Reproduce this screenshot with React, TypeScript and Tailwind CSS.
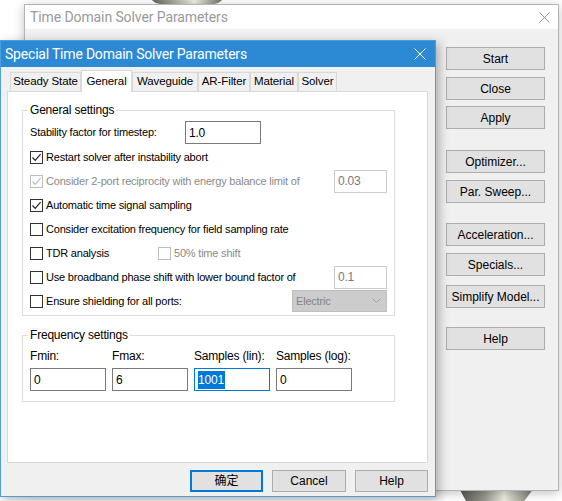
import React from 'react';

const FONT = "font-['Liberation_Sans',Arial,sans-serif]";

function CheckBox({ checked, disabled }: { checked?: boolean; disabled?: boolean }) {
  const border = disabled ? 'border-[#bcbcbc]' : 'border-[#333333]';
  return (
    <span className={`flex h-[13px] w-[13px] shrink-0 items-center justify-center border bg-white ${border}`}>
      {checked && (
        <svg width="11" height="11" viewBox="0 0 11 11">
          <path d="M1.5 5.5 L4.2 8.3 L9.6 2.2" fill="none" stroke={disabled ? '#bcbcbc' : '#222'} strokeWidth="1.2" />
        </svg>
      )}
    </span>
  );
}

function CheckRow({ label, checked, disabled, children }: { label: string; checked?: boolean; disabled?: boolean; children?: React.ReactNode }) {
  return (
    <div className="flex h-[24px] items-center">
      <CheckBox checked={checked} disabled={disabled} />
      <span className={`ml-[3px] ${disabled ? 'text-[#8a8a8a]' : 'text-black'}`}>{label}</span>
      {children}
    </div>
  );
}

function WinButton({ label, className = '' }: { label: string; className?: string }) {
  return (
    <div className={`flex h-[23px] w-[99px] items-center justify-center border border-[#adadad] bg-[#e1e1e1] text-[12px] text-black ${className}`}>
      {label}
    </div>
  );
}

function CloseX({ color, size = 12 }: { color: string; size?: number }) {
  return (
    <svg width={size} height={size} viewBox="0 0 12 12">
      <path d="M0.5 0.5 L11.5 11.5 M11.5 0.5 L0.5 11.5" stroke={color} strokeWidth="1" />
    </svg>
  );
}

function BackWindow() {
  const buttons: { label: string; mt: string }[] = [
    { label: 'Start', mt: 'mt-0' },
    { label: 'Close', mt: 'mt-[7px]' },
    { label: 'Apply', mt: 'mt-[6px]' },
    { label: 'Optimizer...', mt: 'mt-[21px]' },
    { label: 'Par. Sweep...', mt: 'mt-[7px]' },
    { label: 'Acceleration...', mt: 'mt-[20px]' },
    { label: 'Specials...', mt: 'mt-[7px]' },
    { label: 'Simplify Model...', mt: 'mt-[9px]' },
    { label: 'Help', mt: 'mt-[19px]' },
  ];
  return (
    <div className="absolute left-[24px] top-[4px] flex h-[487px] w-[535px] flex-col border border-[#b4b4b4] bg-[#f0f0f0] shadow-[0_2px_10px_rgba(0,0,0,0.25)]">
      <div className="flex h-[24px] items-center justify-between bg-white pl-[5px] pr-[8px]">
        <span className="font-['Roboto',sans-serif] text-[14px] tracking-[-0.1px] text-[#9a9a9a]">Time Domain Solver Parameters</span>
        <CloseX color="#8a8a8a" size={11} />
      </div>
      <div className="flex justify-end pr-[13px] pt-[18px]">
        <div className="flex flex-col">
          {buttons.map((b) => (
            <WinButton key={b.label} label={b.label} className={b.mt} />
          ))}
        </div>
      </div>
    </div>
  );
}

const TABS = [
  { label: 'Steady State', w: 'w-[71px]' },
  { label: 'General', w: 'w-[51px]', active: true },
  { label: 'Waveguide', w: 'w-[66px]' },
  { label: 'AR-Filter', w: 'w-[52px]' },
  { label: 'Material', w: 'w-[48px]' },
  { label: 'Solver', w: 'w-[39px]' },
];

function TextBox({ value, disabled, focused, w = 'w-[76px]' }: { value: string; disabled?: boolean; focused?: boolean; w?: string }) {
  const border = focused ? 'border-[#0078d7]' : disabled ? 'border-[#cccccc]' : 'border-[#7a7a7a]';
  return (
    <div className={`flex h-[23px] ${w} items-center border bg-white pl-[3px] text-[12px] ${border}`}>
      {focused ? (
        <span className="bg-[#0078d7] pr-[1px] text-white">{value}</span>
      ) : (
        <span className={disabled ? 'text-[#7a7a7a]' : 'text-black'}>{value}</span>
      )}
    </div>
  );
}

function FrontDialog() {
  return (
    <div className={`absolute left-0 top-[40px] flex h-[457px] w-[436px] flex-col border border-[#4d9fdc] bg-[#f0f0f0] shadow-[3px_3px_10px_rgba(0,0,0,0.3)] ${FONT} text-[11px]`}>
      <div className="flex h-[26px] shrink-0 items-center justify-between bg-[#2b8ad3] pl-[4px] pr-[9px]">
        <span className="font-['Roboto',sans-serif] text-[14px] tracking-[-0.2px] text-white">Special Time Domain Solver Parameters</span>
        <CloseX color="#ffffff" />
      </div>

      <div className="ml-[6px] mr-[7px] mt-[3px] flex flex-col">
        <div className="relative z-10 flex h-[21px] items-end pl-[3px] text-[11.5px] tracking-[-0.1px]">
          {TABS.map((t) =>
            t.active ? (
              <div key={t.label} className={`${t.w} mb-[-1px] flex h-[22px] items-center justify-center border border-b-0 border-[#d9d9d9] bg-white`}>
                {t.label}
              </div>
            ) : (
              <div key={t.label} className={`${t.w} flex h-[19px] items-center justify-center border border-b-0 border-[#d9d9d9] bg-[#f0f0f0]`}>
                {t.label}
              </div>
            )
          )}
        </div>

        <div className="flex h-[372px] flex-col border border-[#d9d9d9] bg-white px-[14px] pt-[11px] tracking-[-0.2px]">
          <fieldset className="w-[373px] border border-[#dcdcdc] px-[7px] pb-[2px]">
            <legend className="ml-[-2px] px-[2px] text-[12px] leading-[14px]">General settings</legend>
            <div className="mt-[3px] flex h-[25px] items-center">
              <span className="w-[155px]">Stability factor for timestep:</span>
              <TextBox value="1.0" />
            </div>
            <CheckRow label="Restart solver after instability abort" checked />
            <CheckRow label="Consider 2-port reciprocity with energy balance limit of" checked disabled>
              <div className="ml-auto">
                <TextBox value="0.03" disabled w="w-[53px]" />
              </div>
            </CheckRow>
            <CheckRow label="Automatic time signal sampling" checked />
            <CheckRow label="Consider excitation frequency for field sampling rate" />
            <div className="flex h-[24px] items-center">
              <CheckBox />
              <span className="ml-[3px] w-[112px]">TDR analysis</span>
              <CheckBox disabled />
              <span className="ml-[3px] text-[#8a8a8a]">50% time shift</span>
            </div>
            <CheckRow label="Use broadband phase shift with lower bound factor of">
              <div className="ml-auto">
                <TextBox value="0.1" disabled w="w-[53px]" />
              </div>
            </CheckRow>
            <CheckRow label="Ensure shielding for all ports:">
              <div className="ml-auto flex h-[22px] w-[95px] items-center justify-between border border-[#bfbfbf] bg-[#cccccc] pl-[3px] pr-[5px] text-[#838383]">
                <span>Electric</span>
                <svg width="9" height="6" viewBox="0 0 9 6">
                  <path d="M0.5 0.5 L4.5 4.5 L8.5 0.5" fill="none" stroke="#a0a0a0" strokeWidth="1" />
                </svg>
              </div>
            </CheckRow>
          </fieldset>

          <fieldset className="mt-[12px] w-[373px] border border-[#dcdcdc] px-[7px] pb-[10px]">
            <legend className="ml-[-2px] px-[2px] text-[12px] leading-[14px]">Frequency settings</legend>
            <div className="mt-[7px] flex gap-[6px]">
              {[
                { l: 'Fmin:', v: '0' },
                { l: 'Fmax:', v: '6' },
                { l: 'Samples (lin):', v: '1001', f: true },
                { l: 'Samples (log):', v: '0' },
              ].map((c) => (
                <div key={c.l} className="flex w-[76px] flex-col gap-[5px]">
                  <span className="whitespace-nowrap text-[12px] leading-[14px]">{c.l}</span>
                  <TextBox value={c.v} focused={c.f} />
                </div>
              ))}
            </div>
          </fieldset>
        </div>

        <div className="mt-[7px] flex justify-end gap-[9px] text-[12px]">
          <div className="flex h-[22px] w-[73px] items-center justify-center border-2 border-[#0078d7] bg-[#e1e1e1] font-['Liberation_Sans','Noto_Sans_CJK_SC',sans-serif]">确定</div>
          <div className="flex h-[22px] w-[74px] items-center justify-center border border-[#adadad] bg-[#e1e1e1]">Cancel</div>
          <div className="flex h-[22px] w-[73px] items-center justify-center border border-[#adadad] bg-[#e1e1e1]">Help</div>
        </div>
      </div>
    </div>
  );
}

export default function App() {
  return (
    <div className={`relative h-[501px] w-[562px] overflow-hidden bg-white ${FONT}`}>
      {/* metallic part of the model peeking out behind the windows */}
      <div className="absolute left-[150px] top-[-6px] h-[10px] w-[74px] rounded-b-[20px] bg-[linear-gradient(90deg,#5e5e55,#c9c9bc_45%,#f0f0e4_60%,#6a6a60)]" />
      <div className="absolute left-[459px] top-[488px] h-[14px] w-[75px] bg-[linear-gradient(90deg,#55554d,#9a9a90_35%,#ecece0_60%,#77776d)] [clip-path:polygon(0_0,100%_0,86%_100%,10%_100%)]" />
      <BackWindow />
      <FrontDialog />
    </div>
  );
}
